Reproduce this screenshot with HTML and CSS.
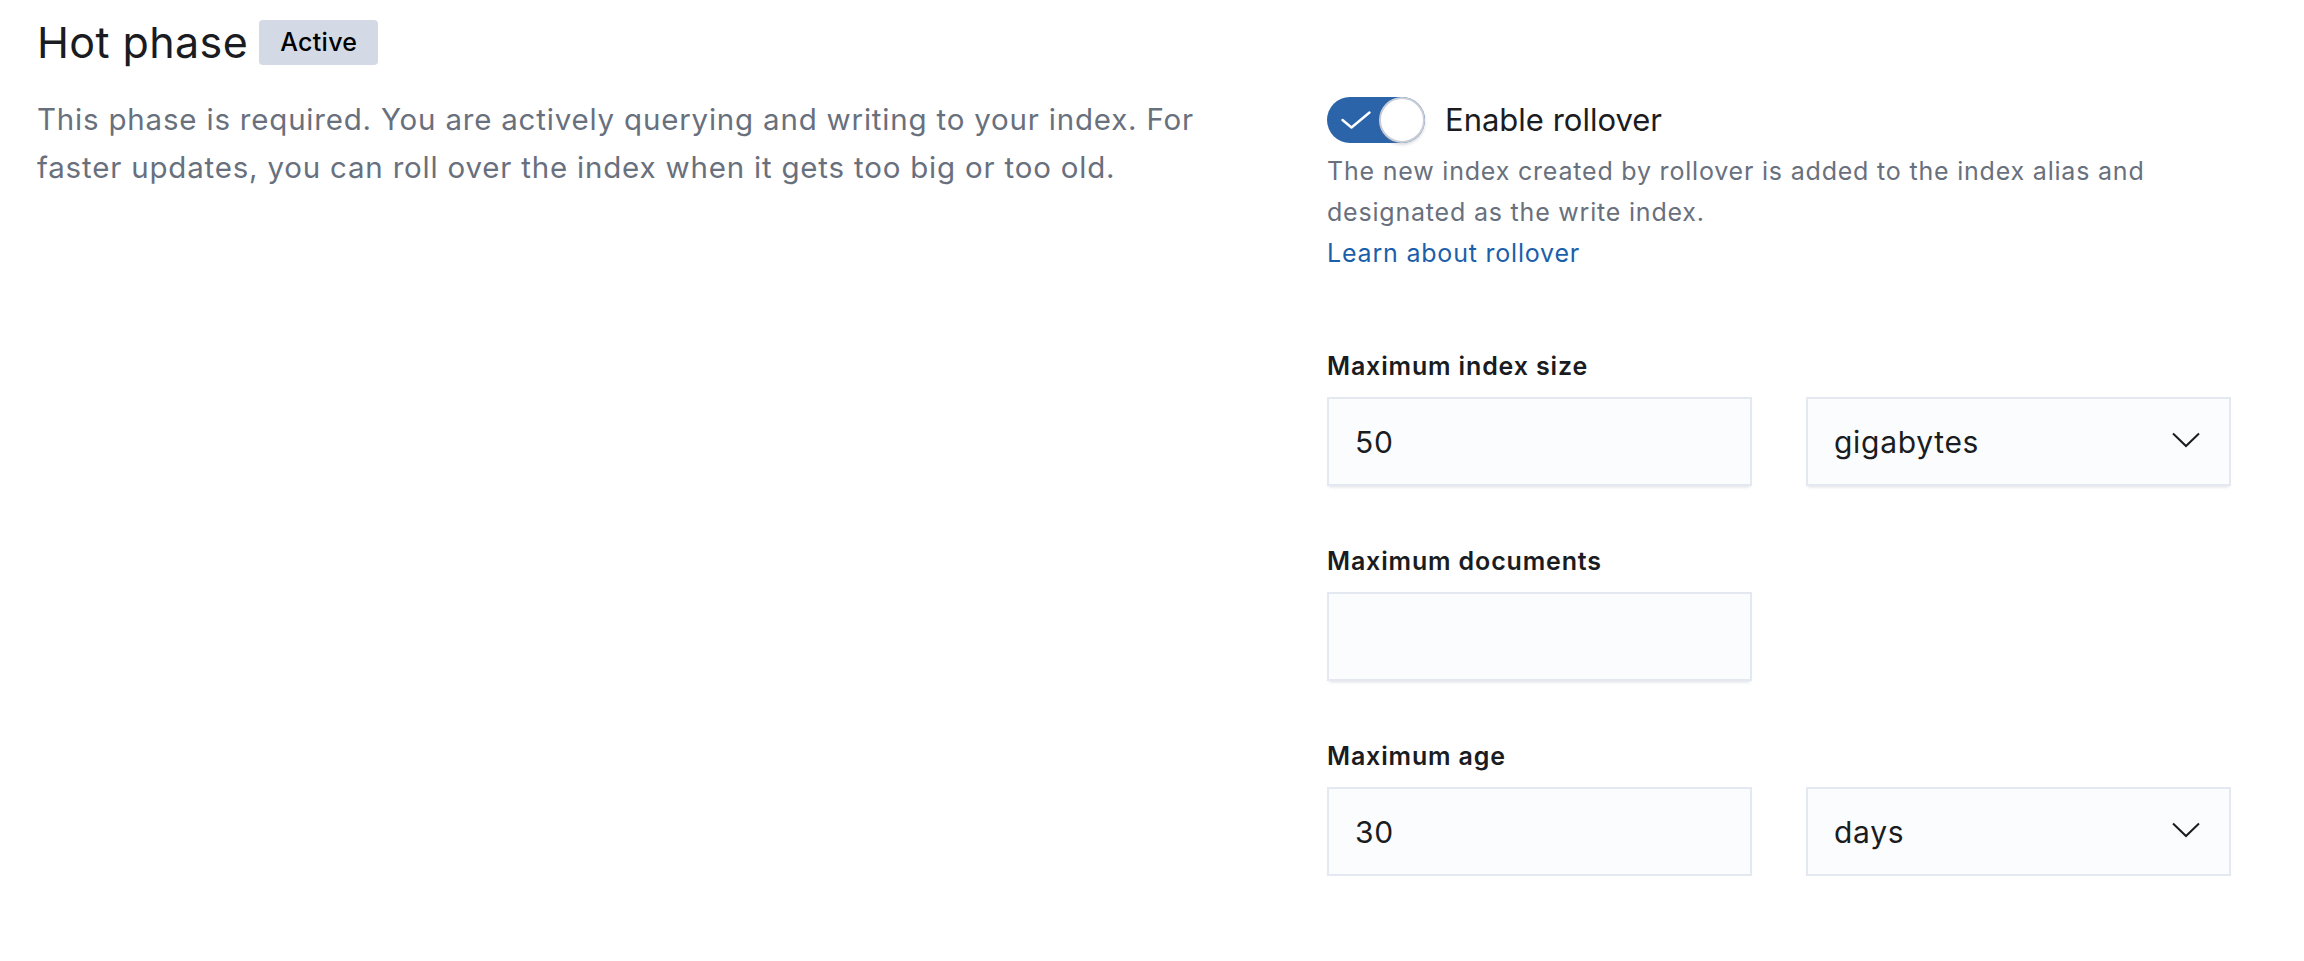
FILE: index.html
```html
<!DOCTYPE html>
<html lang="en">
<head>
<meta charset="utf-8">
<title>Hot phase</title>
<link rel="stylesheet" href="styles.css">
</head>
<body>
<div class="page">
  <div class="header">
    <h2 class="title">Hot phase</h2>
    <span class="badge">Active</span>
  </div>
  <div class="phase">
    <div class="left">
      <p class="desc">This phase is required. You are actively querying and writing to your index. For faster updates, you can roll over the index when it gets too big or too old.</p>
    </div>
    <div class="right">
      <div class="switch-row">
        <span class="switch">
          <svg class="check" width="30" height="18" viewBox="0 0 30 18"><polyline points="1.5,9 10.5,16.5 28.5,1.5" fill="none" stroke="#ffffff" stroke-width="2.4" stroke-linecap="round" stroke-linejoin="round"/></svg>
          <span class="knob"></span>
        </span>
        <span class="switch-label">Enable rollover</span>
      </div>
      <div class="help">The new index created by rollover is added to the index alias and designated as the write index.<br><a class="link" href="#">Learn about rollover</a></div>

      <div class="field first">
        <div class="label">Maximum index size</div>
        <div class="controls">
          <div class="control">50</div>
          <div class="control select">gigabytes<svg class="chev" width="28" height="16" viewBox="0 0 28 16"><polyline points="1,1.5 14,14 27,1.5" fill="none" stroke="#1a1c21" stroke-width="2"/></svg></div>
        </div>
      </div>

      <div class="field">
        <div class="label">Maximum documents</div>
        <div class="controls">
          <div class="control"></div>
        </div>
      </div>

      <div class="field">
        <div class="label">Maximum age</div>
        <div class="controls">
          <div class="control">30</div>
          <div class="control select">days<svg class="chev" width="28" height="16" viewBox="0 0 28 16"><polyline points="1,1.5 14,14 27,1.5" fill="none" stroke="#1a1c21" stroke-width="2"/></svg></div>
        </div>
      </div>
    </div>
  </div>
</div>
</body>
</html>
```
FILE: styles.css
```css
* { box-sizing: border-box; }
html, body { margin: 0; padding: 0; background: #ffffff; }
body { font-family: Inter, "Noto Sans", "Liberation Sans", sans-serif; color: #1a1c21; }

.page { padding: 17px 0 0 37px; }

.header { display: flex; align-items: center; height: 50px; }
.title { margin: 0; font-size: 43px; line-height: 50px; font-weight: 400; color: #1a1c21; letter-spacing: 0.4px; }
.badge {
  margin-left: 11px;
  height: 45px; line-height: 45px;
  padding: 0 21px;
  background: #d3dae6; border-radius: 4px;
  font-size: 25px; font-weight: 500; color: #000000; letter-spacing: 0.3px;
}

.phase { display: flex; align-items: flex-start; margin-top: 28px; }
.left { flex: 0 0 1200px; }
.desc { margin: 0; font-size: 29.5px; line-height: 48px; color: #69707d; letter-spacing: 0.8px; }

.right { margin-left: 90px; width: 905px; padding-top: 2px; }

.switch-row { display: flex; align-items: center; height: 46px; }
.switch {
  position: relative; flex: 0 0 98px; height: 46px;
  background: #2c64a9; border-radius: 23px;
}
.check { position: absolute; left: 14px; top: 14px; }
.knob {
  position: absolute; right: 0; top: 0; width: 46px; height: 46px;
  background: #ffffff; border-radius: 50%;
  border: 2px solid #c9ced8;
  box-shadow: 0 2px 3px rgba(100, 110, 130, 0.25);
}
.switch-label { margin-left: 20px; font-size: 31px; line-height: 46px; color: #1a1c21; }

.help { margin-top: 8px; font-size: 25px; line-height: 41px; color: #69707d; letter-spacing: 0.8px; }
.link { color: #1b5fab; text-decoration: none; }

.field { margin-top: 57px; }
.field.first { margin-top: 74px; }
.label { font-size: 25px; line-height: 36px; font-weight: 600; color: #1a1c21; letter-spacing: 0.85px; }
.controls { display: flex; gap: 54px; margin-top: 13px; }
.control {
  position: relative;
  width: 425px; height: 89px;
  padding: 0 28px;
  display: flex; align-items: center;
  background: #fbfcfd;
  box-shadow: inset 0 0 0 2px #e4e8f0, 0 3px 3px -2px rgba(152, 162, 179, 0.35);
  font-size: 30px; color: #1a1c21; letter-spacing: 0.7px;
}
.select { justify-content: space-between; padding-right: 31px; }
.chev { margin-top: -4px; }
```
